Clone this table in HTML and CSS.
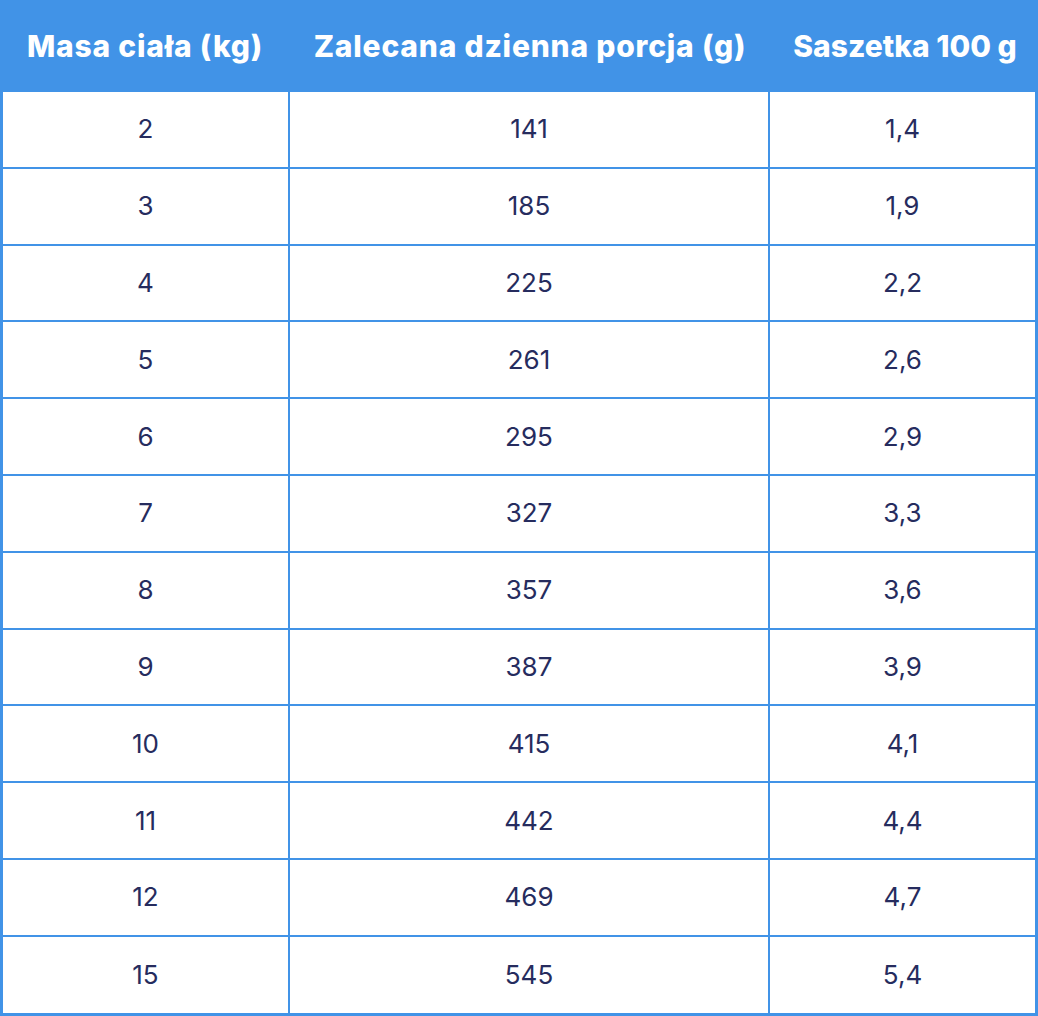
FILE: index.html
```html
<!DOCTYPE html>
<html lang="pl">
<head>
<meta charset="utf-8">
<title>Tabela dawkowania</title>
<link rel="stylesheet" href="styles.css">
</head>
<body>
<table class="feed">
  <colgroup>
    <col class="c1">
    <col class="c2">
    <col class="c3">
  </colgroup>
  <thead>
    <tr>
      <th>Masa ciała (kg)</th>
      <th>Zalecana dzienna porcja (g)</th>
      <th class="tight">Saszetka 100 g</th>
    </tr>
  </thead>
  <tbody>
    <tr><td>2</td><td>141</td><td>1,4</td></tr>
    <tr><td>3</td><td>185</td><td>1,9</td></tr>
    <tr><td>4</td><td>225</td><td>2,2</td></tr>
    <tr><td>5</td><td>261</td><td>2,6</td></tr>
    <tr><td>6</td><td>295</td><td>2,9</td></tr>
    <tr><td>7</td><td>327</td><td>3,3</td></tr>
    <tr><td>8</td><td>357</td><td>3,6</td></tr>
    <tr><td>9</td><td>387</td><td>3,9</td></tr>
    <tr><td>10</td><td>415</td><td>4,1</td></tr>
    <tr><td>11</td><td>442</td><td>4,4</td></tr>
    <tr><td>12</td><td>469</td><td>4,7</td></tr>
    <tr><td>15</td><td>545</td><td>5,4</td></tr>
  </tbody>
</table>
</body>
</html>
```

FILE: styles.css
```css
html, body {
  margin: 0;
  padding: 0;
  background: #ffffff;
}

.feed {
  width: 1038px;
  border-collapse: separate;
  border-spacing: 0;
  table-layout: fixed;
  font-family: "Inter", "Noto Sans", sans-serif;
}

.c1 { width: 290px; }
.c2 { width: 480px; }
.c3 { width: 268px; }

.feed th {
  background: #4193e7;
  color: #ffffff;
  height: 92px;
  padding: 0;
  font-size: 30px;
  font-weight: 800;
  letter-spacing: 0.8px;
  line-height: 36px;
  text-align: center;
  vertical-align: middle;
  box-sizing: border-box;
}

.feed th.tight {
  letter-spacing: 0;
  padding-left: 2px;
}

.feed td {
  height: 74.8px;
  padding: 0;
  text-align: center;
  vertical-align: middle;
  color: #262c5e;
  font-size: 26px;
  font-weight: 400;
  line-height: 30px;
  border-right: 2px solid #4193e7;
  border-bottom: 2px solid #4193e7;
}

.feed td:first-child {
  border-left: 3px solid #4193e7;
}

.feed td:last-child {
  border-right: 3px solid #4193e7;
}

.feed tbody tr:last-child td {
  height: 76px;
  border-bottom: 3px solid #4193e7;
}
```
